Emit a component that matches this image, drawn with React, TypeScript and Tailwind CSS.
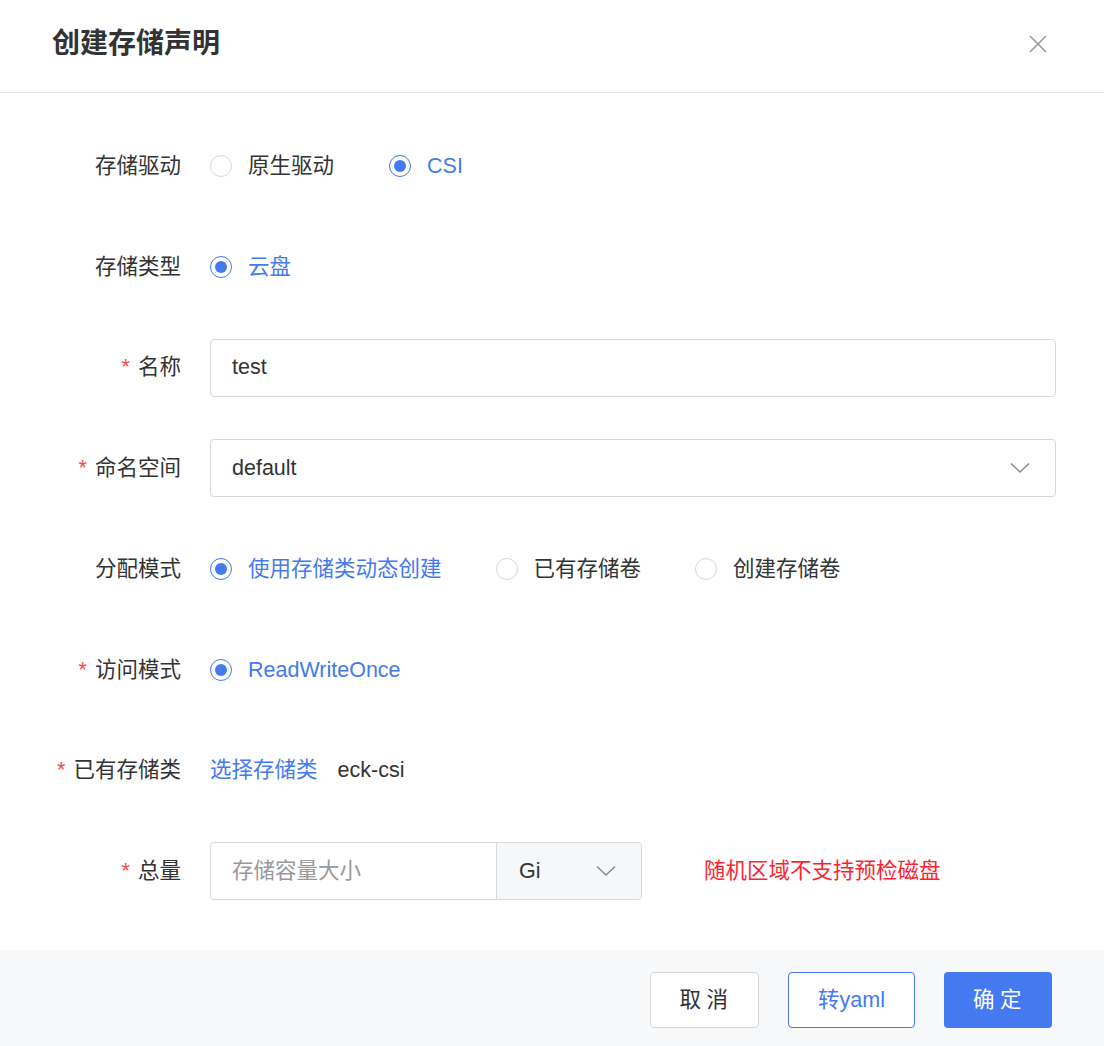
const font = { fontFamily: '"Liberation Sans", "Noto Sans CJK SC", sans-serif' };

function Chevron() {
  return (
    <svg width="20" height="12" viewBox="0 0 20 12" fill="none" className="text-[#888]">
      <path d="M1 1.5 L10 10 L19 1.5" stroke="currentColor" strokeWidth="1.4" />
    </svg>
  );
}

function Radio({ label, checked }: { label: string; checked?: boolean }) {
  return (
    <label className="flex items-center gap-4 cursor-pointer">
      <span
        className={
          "w-[22px] h-[22px] rounded-full border flex items-center justify-center bg-white " +
          (checked ? "border-[#4479f2]" : "border-[#d9d9d9]")
        }
      >
        {checked && <span className="w-[12px] h-[12px] rounded-full bg-[#4479f2]" />}
      </span>
      <span className={checked ? "text-[#4479f2]" : "text-[#333]"}>{label}</span>
    </label>
  );
}

function Row({
  label,
  required,
  children,
}: {
  label: string;
  required?: boolean;
  children: React.ReactNode;
}) {
  return (
    <div className="flex items-center h-[58px]">
      <div className="w-[181px] shrink-0 text-right text-[#333]">
        {required && <span className="text-[#f5484d] mr-2">*</span>}
        {label}
      </div>
      <div className="ml-[29px] flex-1 flex items-center">{children}</div>
    </div>
  );
}

export default function App() {
  return (
    <div className="w-[1104px] h-[1046px] bg-white flex flex-col text-[21.5px]" style={font}>
      {/* Header */}
      <header className="h-[93px] shrink-0 border-b border-[#e5e6eb] flex items-center justify-between pl-[52px] pr-[57px]">
        <h1 className="text-[28px] font-semibold text-[#333] -mt-1">创建存储声明</h1>
        <svg width="18" height="18" viewBox="0 0 18 18" className="text-[#999] -mt-1">
          <path d="M1 1 L17 17 M17 1 L1 17" stroke="currentColor" strokeWidth="1.6" />
        </svg>
      </header>

      {/* Form */}
      <main className="flex-1 flex flex-col gap-[42.75px] pt-[44px] pr-[48px]">
        <Row label="存储驱动">
          <div className="flex items-center gap-[55px]">
            <Radio label="原生驱动" />
            <Radio label="CSI" checked />
          </div>
        </Row>
        <Row label="存储类型">
          <Radio label="云盘" checked />
        </Row>
        <Row label="名称" required>
          <div className="w-full h-[58px] border border-[#d9d9d9] rounded-[4px] flex items-center px-[21px] text-[#333]">
            test
          </div>
        </Row>
        <Row label="命名空间" required>
          <div className="w-full h-[58px] border border-[#d9d9d9] rounded-[4px] flex items-center justify-between pl-[21px] pr-[25px] text-[#333]">
            <span>default</span>
            <Chevron />
          </div>
        </Row>
        <Row label="分配模式">
          <div className="flex items-center gap-[54px]">
            <Radio label="使用存储类动态创建" checked />
            <Radio label="已有存储卷" />
            <Radio label="创建存储卷" />
          </div>
        </Row>
        <Row label="访问模式" required>
          <Radio label="ReadWriteOnce" checked />
        </Row>
        <Row label="已有存储类" required>
          <div className="flex items-center gap-5">
            <span className="text-[#4479f2]">选择存储类</span>
            <span className="text-[#333]">eck-csi</span>
          </div>
        </Row>
        <Row label="总量" required>
          <div className="flex items-center h-[58px] w-[432px] border border-[#d9d9d9] rounded-[4px]">
            <div className="w-[286px] h-full flex items-center px-[21px] text-[#999] border-r border-[#d9d9d9]">
              存储容量大小
            </div>
            <div className="flex-1 h-full bg-[#f6f7f9] rounded-r-[4px] flex items-center justify-between pl-[22px] pr-[25px] text-[#333]">
              <span>Gi</span>
              <Chevron />
            </div>
          </div>
          <span className="ml-[62px] text-[#ff1f2f]">随机区域不支持预检磁盘</span>
        </Row>
      </main>

      {/* Footer */}
      <footer className="h-[96px] shrink-0 bg-[#f7f8fa] flex items-start justify-end gap-[29px] pr-[52px] pt-[22px]">
        <button className="w-[109px] h-[56px] rounded-[4px] border border-[#d9d9d9] bg-white text-[#333] tracking-[0.25em] pl-1">
          取消
        </button>
        <button className="w-[127px] h-[56px] rounded-[4px] border border-[#4479f2] bg-white text-[#4479f2]">
          转yaml
        </button>
        <button className="w-[108px] h-[56px] rounded-[4px] bg-[#4479f2] text-white tracking-[0.25em] pl-1">
          确定
        </button>
      </footer>
    </div>
  );
}
